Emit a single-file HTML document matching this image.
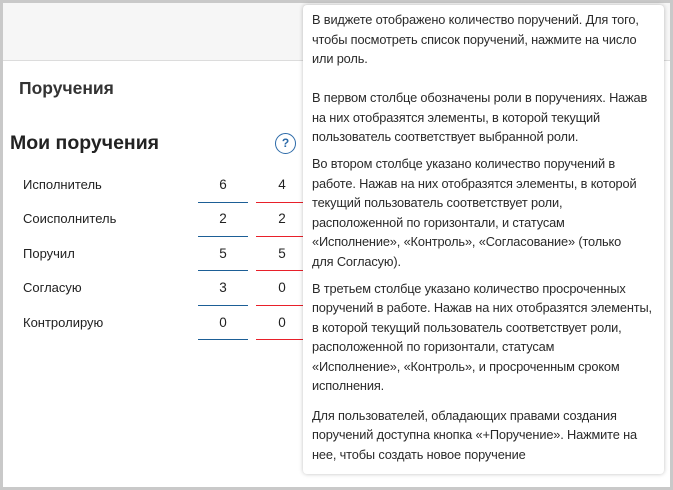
<!DOCTYPE html>
<html><head><meta charset="utf-8"><style>
*{margin:0;padding:0;box-sizing:border-box}
body{width:673px;height:490px;overflow:hidden;background:#c9c9c9;font-family:"Liberation Sans",sans-serif;position:relative}
.frame{position:absolute;left:3px;top:3px;width:667px;height:484px;background:#fff}
.head{position:absolute;left:0;top:0;width:667px;height:58px;background:#f6f6f6;border-bottom:1px solid #dcdcdc}
.t1{position:absolute;left:19px;top:78px;font-size:17.5px;color:#333;font-weight:bold}
.t2{position:absolute;left:10px;top:132px;font-size:19.5px;color:#222;font-weight:bold}
.q{position:absolute;left:275px;top:133px;width:21px;height:21px;border:1.5px solid #2c6aa8;border-radius:50%;color:#2c6aa8;font-size:12px;text-align:center;line-height:18px;font-weight:bold}
.row{position:absolute;left:0;font-size:13px;color:#222}
.lab{position:absolute;left:23px;top:-8px;white-space:nowrap}
.n{position:absolute;top:-8px;width:50px;text-align:center;font-size:13.5px}
.bl{position:absolute;height:1px}
.tip{position:absolute;left:303px;top:5px;width:361px;height:469px;background:#fff;border-radius:4px;box-shadow:0 0 4px rgba(0,0,0,.25);padding:5px 9px;font-size:12.8px;color:#2a2a2a;line-height:19.5px;letter-spacing:-0.15px;white-space:nowrap}
.tip p{margin-bottom:7.5px}
</style></head><body>
<div class="frame">
<div class="head"></div>
</div>
<div class="t1">Поручения</div>
<div class="t2">Мои поручения</div>
<div class="q">?</div>

<div class="row" style="top:185px"><span class="lab">Исполнитель</span><span class="n" style="left:198px">6</span><span class="n" style="left:257px">4</span></div>
<div class="row" style="top:219px"><span class="lab">Соисполнитель</span><span class="n" style="left:198px">2</span><span class="n" style="left:257px">2</span></div>
<div class="row" style="top:254px"><span class="lab">Поручил</span><span class="n" style="left:198px">5</span><span class="n" style="left:257px">5</span></div>
<div class="row" style="top:288px"><span class="lab">Согласую</span><span class="n" style="left:198px">3</span><span class="n" style="left:257px">0</span></div>
<div class="row" style="top:323px"><span class="lab">Контролирую</span><span class="n" style="left:198px">0</span><span class="n" style="left:257px">0</span></div>

<div class="bl" style="left:198px;top:202px;width:50px;background:#1d5f96"></div>
<div class="bl" style="left:256px;top:202px;width:48px;background:#e8202a"></div>
<div class="bl" style="left:198px;top:236px;width:50px;background:#1d5f96"></div>
<div class="bl" style="left:256px;top:236px;width:48px;background:#e8202a"></div>
<div class="bl" style="left:198px;top:270px;width:50px;background:#1d5f96"></div>
<div class="bl" style="left:256px;top:270px;width:48px;background:#e8202a"></div>
<div class="bl" style="left:198px;top:305px;width:50px;background:#1d5f96"></div>
<div class="bl" style="left:256px;top:305px;width:48px;background:#e8202a"></div>
<div class="bl" style="left:198px;top:339px;width:50px;background:#1d5f96"></div>
<div class="bl" style="left:256px;top:339px;width:48px;background:#e8202a"></div>

<div class="tip">
<p>В виджете отображено количество поручений. Для того,<br>чтобы посмотреть список поручений, нажмите на число<br>или роль.<br><br>В первом столбце обозначены роли в поручениях. Нажав<br>на них отобразятся элементы, в которой текущий<br>пользователь соответствует выбранной роли.</p>
<p>Во втором столбце указано количество поручений в<br>работе. Нажав на них отобразятся элементы, в которой<br>текущий пользователь соответствует роли,<br>расположенной по горизонтали, и статусам<br>«Исполнение», «Контроль», «Согласование» (только<br>для Согласую).</p>
<p style="margin-bottom:10px">В третьем столбце указано количество просроченных<br>поручений в работе. Нажав на них отобразятся элементы,<br>в которой текущий пользователь соответствует роли,<br>расположенной по горизонтали, статусам<br>«Исполнение», «Контроль», и просроченным сроком<br>исполнения.</p>
<p>Для пользователей, обладающих правами создания<br>поручений доступна кнопка «+Поручение». Нажмите на<br>нее, чтобы создать новое поручение</p>
</div>
</body></html>
